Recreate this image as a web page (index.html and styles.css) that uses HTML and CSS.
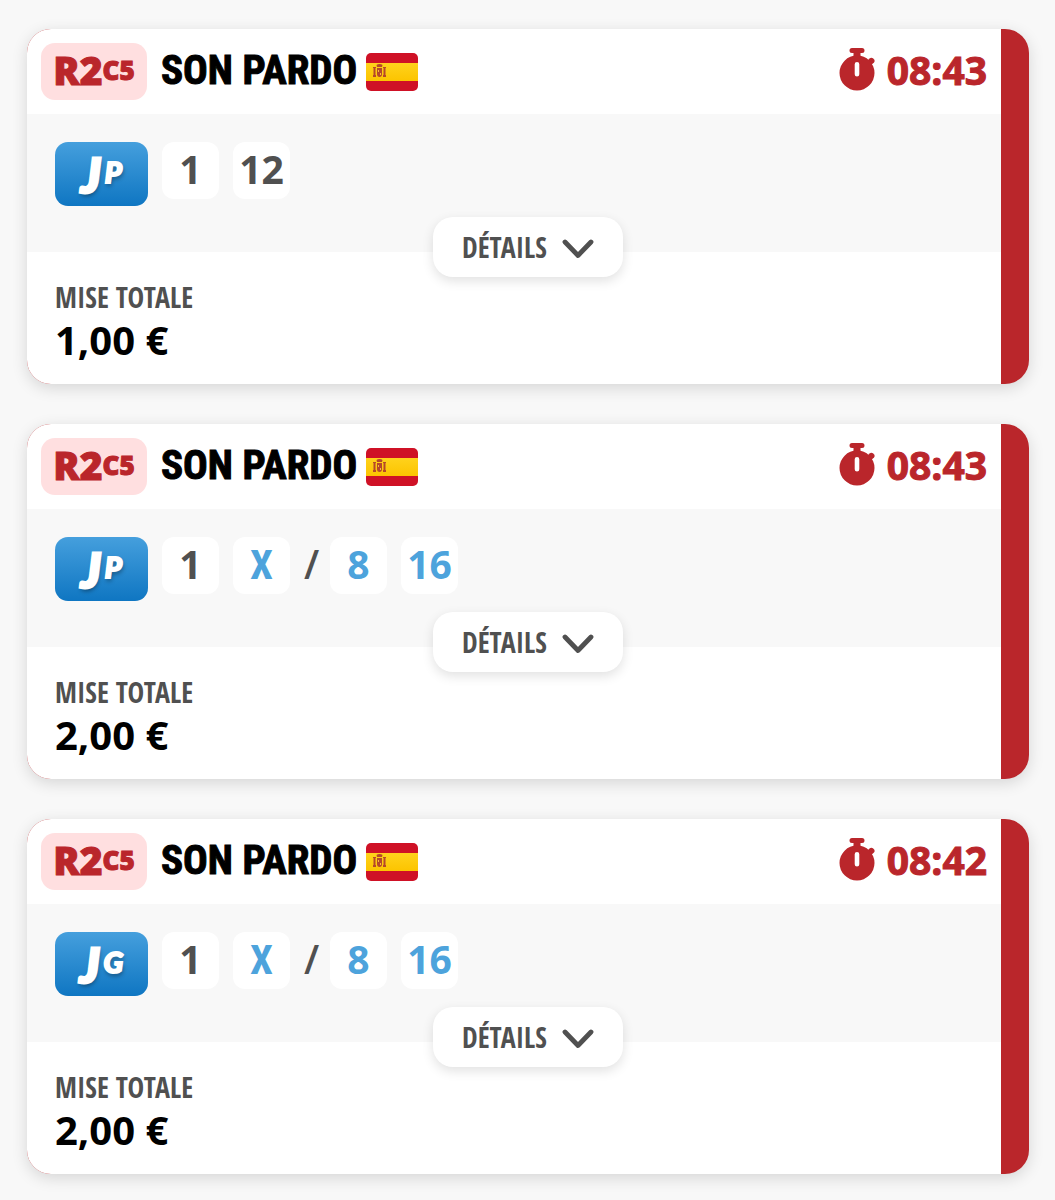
FILE: index.html
```html
<!DOCTYPE html>
<html lang="fr">

<head>
    <meta charset="utf-8">
    <meta name="viewport" content="width=device-width, initial-scale=1.0">
    <title>Mes paris</title>
    <link rel="stylesheet" href="styles.css">
</head>

<body>
    <!-- shared drawings -->
    <svg class="sprite" aria-hidden="true">
        <defs>
            <linearGradient id="gold" x1="0" y1="0" x2="0" y2="1">
                <stop offset="0" stop-color="#ffd21c" />
                <stop offset="1" stop-color="#fcc400" />
            </linearGradient>
        </defs>
        <symbol id="flag-es" viewBox="0 0 52 38">
            <rect width="52" height="38" rx="5" fill="#cf1126" />
            <rect y="10" width="52" height="18" fill="url(#gold)" />
            <g fill="#b5482a">
                <path d="M7 14h3v1h-.5v7h.5v2H7v-2h.5v-7H7zM17 14h3v1h-.5v7h.5v2h-3v-2h.5v-7H17z" />
                <path d="M11 14l-.5-2q1-1 3-1t3 1l-.5 2z" />
                <path d="M11 15h5v6q0 3-2.500 3T11 21z" />
            </g>
            <path d="M12 17h1v2h-1zM14 20h1v2h-1z" fill="#f6bd3b" />
        </symbol>
        <symbol id="stopwatch" viewBox="0 0 36 44">
            <path d="M13 0h10q2.500 0 2.500 2.500T23 5h-1.500v5h-7V5H13q-2.500 0-2.500-2.500T13 0z" />
            <path d="M27 14l3.500-3.500q2-1.500 4 .3t.5 3.700L31 18z" />
            <path fill-rule="evenodd"
                d="M18 7.500a17.500 17.500 0 1 0 0 35a17.500 17.500 0 1 0 0-35zM18 14q2.300 0 2.300 2.300v9.900q0 2.300-2.300 2.300t-2.300-2.300v-9.900Q15.700 14 18 14z" />
        </symbol>
        <symbol id="chevron" viewBox="0 0 32 20">
            <path d="M3 3l13 13.500L29 3" fill="none" stroke="currentColor" stroke-width="4.800" stroke-linecap="round"
                stroke-linejoin="round" />
        </symbol>
    </svg>

    <main>
        <article class="card">
            <header>
                <span class="race">R2<small>C5</small></span>
                <h2>SON PARDO</h2>
                <svg class="flag" role="img" aria-label="Espagne"><use href="#flag-es" /></svg>
                <div class="start">
                    <svg class="watch" aria-hidden="true"><use href="#stopwatch" /></svg>
                    <time>08:43</time>
                </div>
            </header>
            <div class="bet">
                <span class="game"><b>J</b><i>P</i></span>
                <span class="num">1</span>
                <span class="num">12</span>
            </div>
            <div class="stake">
                <p class="label">MISE TOTALE</p>
                <p class="amount">1,00 €</p>
            </div>
            <button type="button" class="details">DÉTAILS<svg class="chevron" aria-hidden="true"><use href="#chevron" /></svg></button>
        </article>

        <article class="card">
            <header>
                <span class="race">R2<small>C5</small></span>
                <h2>SON PARDO</h2>
                <svg class="flag" role="img" aria-label="Espagne"><use href="#flag-es" /></svg>
                <div class="start">
                    <svg class="watch" aria-hidden="true"><use href="#stopwatch" /></svg>
                    <time>08:43</time>
                </div>
            </header>
            <div class="bet">
                <span class="game"><b>J</b><i>P</i></span>
                <span class="num">1</span>
                <span class="num blue narrow">X</span>
                <span class="slash">/</span>
                <span class="num blue">8</span>
                <span class="num blue">16</span>
            </div>
            <div class="stake">
                <p class="label">MISE TOTALE</p>
                <p class="amount">2,00 €</p>
            </div>
            <button type="button" class="details">DÉTAILS<svg class="chevron" aria-hidden="true"><use href="#chevron" /></svg></button>
        </article>

        <article class="card">
            <header>
                <span class="race">R2<small>C5</small></span>
                <h2>SON PARDO</h2>
                <svg class="flag" role="img" aria-label="Espagne"><use href="#flag-es" /></svg>
                <div class="start">
                    <svg class="watch" aria-hidden="true"><use href="#stopwatch" /></svg>
                    <time>08:42</time>
                </div>
            </header>
            <div class="bet">
                <span class="game"><b>J</b><i>G</i></span>
                <span class="num">1</span>
                <span class="num blue narrow">X</span>
                <span class="slash">/</span>
                <span class="num blue">8</span>
                <span class="num blue">16</span>
            </div>
            <div class="stake">
                <p class="label">MISE TOTALE</p>
                <p class="amount">2,00 €</p>
            </div>
            <button type="button" class="details">DÉTAILS<svg class="chevron" aria-hidden="true"><use href="#chevron" /></svg></button>
        </article>
    </main>
</body>

</html>
```
FILE: styles.css
```css
*,
*::after,
*::before {
    margin: 0;
    padding: 0;
    box-sizing: border-box;
}

body {
    background-color: #f8f8f8;
    font-family: 'Open Sans', 'Noto Sans', sans-serif;
    font-weight: 700;
    color: #000;
}

.sprite {
    position: absolute;
    width: 0;
    height: 0;
}

main {
    display: flex;
    flex-direction: column;
    gap: 40px;
    padding: 29px 26px 26px 27px;
}

/* the red background shows through as the stripe on the right */
.card {
    position: relative;
    padding-right: 28px;
    border-radius: 24px;
    overflow: hidden;
    background-color: #ba262b;
    box-shadow: 0 4px 16px rgba(0, 0, 0, .14);
}

header {
    display: flex;
    align-items: center;
    padding: 14px;
    background-color: #fff;
}

.race {
    display: flex;
    align-items: center;
    justify-content: center;
    width: 106px;
    height: 57px;
    padding-bottom: 4px;
    margin-right: 14px;
    border-radius: 14px;
    background-color: #ffdfe0;
    color: #ba262b;
    font-size: 39px;
    font-weight: 800;
    -webkit-text-stroke: 1px #ba262b;
}

.race small {
    font-size: 26px;
}

h2 {
    padding-bottom: 2px;
    font-family: 'Roboto Condensed', 'Open Sans Condensed', sans-serif;
    font-size: 41px;
    line-height: 53px;
    -webkit-text-stroke: 1px #000;
}

.flag {
    width: 52px;
    height: 38px;
    margin-left: 9px;
}

.start {
    display: flex;
    align-items: center;
    gap: 12px;
    margin-left: auto;
    padding-bottom: 4px;
    color: #ba262b;
    font-size: 39px;
    line-height: 53px;
    -webkit-text-stroke: 1px #ba262b;
}

.watch {
    width: 36px;
    height: 44px;
    fill: #ba262b;
}

.bet {
    display: flex;
    gap: 14px;
    height: 138px;
    padding: 28px;
    background-color: #f8f8f8;
    color: #505050;
}

.game {
    display: flex;
    justify-content: center;
    gap: 4px;
    width: 93px;
    height: 64px;
    border-radius: 13px;
    background: linear-gradient(#459fdd, #0f76c2);
    color: #fff;
    font-family: Lato, sans-serif;
    font-style: italic;
    font-weight: 900;
    text-shadow: 1px 3px 4px rgba(0, 0, 0, .4);
    -webkit-text-stroke: 3px #fff;
}

.game b {
    font-size: 48px;
    font-weight: 900;
    line-height: 66px;
}

.game i {
    font-size: 29px;
    line-height: 60px;
    -webkit-text-stroke-width: 2px;
}

.num {
    width: 57px;
    height: 57px;
    border-radius: 12px;
    background-color: #fff;
    font-size: 39px;
    line-height: 53px;
    text-align: center;
}

.narrow {
    font-family: 'Roboto Condensed', 'Open Sans Condensed', sans-serif;
    font-size: 41px;
    line-height: 57px;
}

.blue {
    color: #4da3dc;
}

.slash {
    width: 12px;
    font-size: 39px;
    line-height: 53px;
    font-weight: 600;
}

.stake {
    padding: 27px 28px 20px;
    background-color: #fff;
}

.label {
    color: #505050;
    font-family: 'Open Sans Condensed', 'Roboto Condensed', sans-serif;
    font-size: 28px;
    line-height: 36px;
}

.amount {
    font-size: 40px;
    line-height: 49px;
}

/* sits over the seam between the bet and the stake */
.details {
    position: absolute;
    left: 50%;
    bottom: 107px;
    transform: translateX(-50%);
    display: flex;
    align-items: center;
    justify-content: center;
    gap: 15px;
    width: 190px;
    height: 60px;
    border: 0;
    border-radius: 20px;
    background-color: #fff;
    color: #505050;
    box-shadow: 0 4px 12px rgba(0, 0, 0, .12);
    font-family: 'Open Sans Condensed', 'Roboto Condensed', sans-serif;
    font-size: 28px;
    font-weight: 700;
    cursor: pointer;
}

.chevron {
    width: 32px;
    height: 20px;
    margin-top: 4px;
}
```
